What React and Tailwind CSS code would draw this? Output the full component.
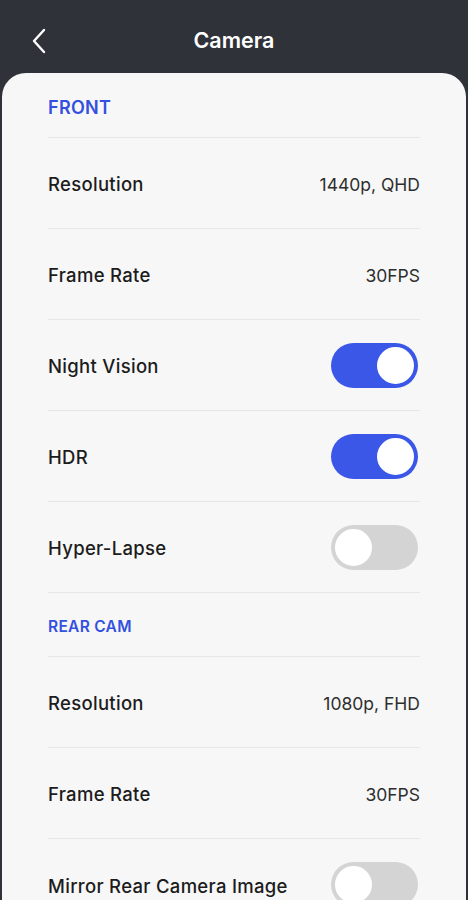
import React, { useState } from 'react';

function Toggle({ on, onChange }) {
  return (
    <button
      onClick={onChange}
      className={`w-[87px] h-[45px] mr-[2px] rounded-full p-[2px] flex items-center shrink-0 ${
        on ? 'bg-[#3a57e8] justify-end' : 'bg-[#d4d4d4] justify-start'
      }`}
    >
      <span
        className={`w-[41px] h-[41px] rounded-full bg-white border-2 ${
          on ? 'border-[#3a57e8]' : 'border-[#d4d4d4]'
        }`}
      />
    </button>
  );
}

function SectionHeader({ title, size, height }) {
  return (
    <div className={`pt-[5px] flex items-center border-b border-[#e6e6e6] ${height}`}>
      <span className={`font-semibold text-[#3350e0] tracking-[0.3px] ${size}`}>{title}</span>
    </div>
  );
}

function Row({ label, children, last }) {
  return (
    <div
      className={`h-[91px] flex items-center justify-between ${
        last ? '' : 'border-b border-[#e6e6e6]'
      }`}
    >
      <span className="text-[18.5px] font-medium text-[#1c1c1c] tracking-[0.3px] pt-[4px]">{label}</span>
      {children}
    </div>
  );
}

function Value({ text }) {
  return <span className="text-[17.5px] text-[#2e2e2e] pt-[4px]">{text}</span>;
}

export default function App() {
  const [front, setFront] = useState({ night: true, hdr: true, hyper: false });
  const [mirror, setMirror] = useState(false);

  return (
    <div className="h-[900px] overflow-hidden bg-[#2f3238] flex flex-col font-['Inter',sans-serif]">
      <header className="h-[73px] shrink-0 relative flex items-center justify-center">
        <button className="absolute left-[29px] top-[26px] text-white">
          <svg width="20" height="30" viewBox="0 0 20 30" fill="none">
            <path d="M15 4 L5 15 L15 26" stroke="white" strokeWidth="2.4" strokeLinecap="round" strokeLinejoin="round" />
          </svg>
        </button>
        <h1 className="text-white text-[21.5px] font-semibold mt-[7px]">Camera</h1>
      </header>

      <main className="flex-1 mx-[2px] bg-[#f7f7f7] rounded-t-[24px] px-[46px]">
        <SectionHeader title="FRONT" size="text-[18px]" height="h-[65px]" />
        <Row label="Resolution">
          <Value text="1440p, QHD" />
        </Row>
        <Row label="Frame Rate">
          <Value text="30FPS" />
        </Row>
        <Row label="Night Vision">
          <Toggle on={front.night} onChange={() => setFront({ ...front, night: !front.night })} />
        </Row>
        <Row label="HDR">
          <Toggle on={front.hdr} onChange={() => setFront({ ...front, hdr: !front.hdr })} />
        </Row>
        <Row label="Hyper-Lapse">
          <Toggle on={front.hyper} onChange={() => setFront({ ...front, hyper: !front.hyper })} />
        </Row>

        <SectionHeader title="REAR CAM" size="text-[15.5px]" height="h-[64px]" />
        <Row label="Resolution">
          <Value text="1080p, FHD" />
        </Row>
        <Row label="Frame Rate">
          <Value text="30FPS" />
        </Row>
        <Row label="Mirror Rear Camera Image" last>
          <Toggle on={mirror} onChange={() => setMirror(!mirror)} />
        </Row>
      </main>
    </div>
  );
}
